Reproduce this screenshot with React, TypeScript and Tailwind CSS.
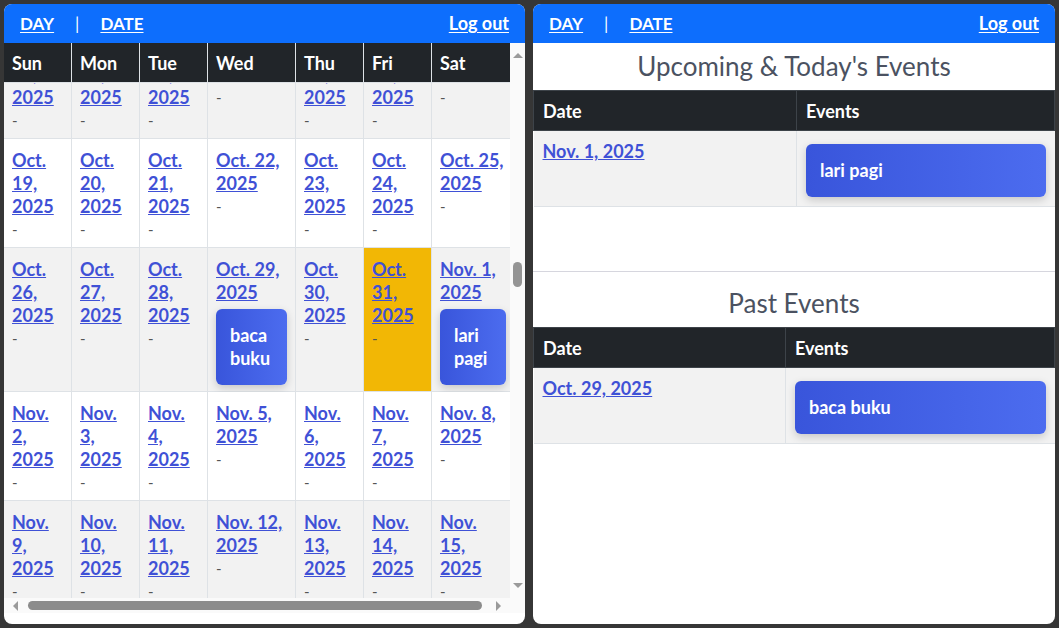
import { useLayoutEffect, useRef } from "react";

// Django-style "N j, Y" month names
const MONTHS = ["Jan.", "Feb.", "March", "April", "May", "June", "July", "Aug.", "Sept.", "Oct.", "Nov.", "Dec."];
const DAYS = ["Sun", "Mon", "Tue", "Wed", "Thu", "Fri", "Sat"];
const COL_W = ["w-[68px]", "w-[68px]", "w-[68px]", "w-[88px]", "w-[68px]", "w-[68px]", "w-[83px]"];

const EVENTS: Record<string, string[]> = {
  "2025-10-29": ["baca buku"],
  "2025-11-01": ["lari pagi"],
};
const TODAY = "2025-10-31";

const pad = (n: number) => String(n).padStart(2, "0");
const keyOf = (d: Date) => `${d.getUTCFullYear()}-${pad(d.getUTCMonth() + 1)}-${pad(d.getUTCDate())}`;
const label = (d: Date) => `${MONTHS[d.getUTCMonth()]} ${d.getUTCDate()}, ${d.getUTCFullYear()}`;

function buildWeeks() {
  const weeks: Date[][] = [];
  const cur = new Date(Date.UTC(2024, 11, 29));
  const end = new Date(Date.UTC(2027, 0, 3));
  while (cur < end) {
    const week: Date[] = [];
    for (let i = 0; i < 7; i++) {
      week.push(new Date(cur));
      cur.setUTCDate(cur.getUTCDate() + 1);
    }
    weeks.push(week);
  }
  return weeks;
}

const WEEKS = buildWeeks();
const ANCHOR = WEEKS.findIndex((w) => keyOf(w[0]) === "2025-10-19");

function TopBar() {
  return (
    <div className="flex h-[39px] shrink-0 items-center justify-between bg-[#0d6efd] px-4 text-[17px] font-bold text-white">
      <div className="flex items-center">
        <a className="underline underline-offset-2">DAY</a>
        <span className="mx-[21px] font-normal">|</span>
        <a className="underline underline-offset-2">DATE</a>
      </div>
      <a className="text-[18px] underline underline-offset-2">Log out</a>
    </div>
  );
}

function EventChip({ title }: { title: string }) {
  return (
    <div className="mt-[5px] rounded-md bg-linear-to-r from-[#3955db] to-[#4c6cef] px-[14px] py-[15px] text-[18px] leading-[23px] font-bold text-white shadow-[0_3px_8px_rgba(0,0,0,0.18)]">
      {title}
    </div>
  );
}

// little scrollbar arrow triangles
function Arrow({ dir }: { dir: "up" | "down" | "left" | "right" }) {
  const pts = {
    up: "0,5 5,0 10,5",
    down: "0,0 10,0 5,5",
    left: "5,0 5,10 0,5",
    right: "0,0 0,10 5,5",
  }[dir];
  const vert = dir === "up" || dir === "down";
  return (
    <svg width={vert ? 10 : 5} height={vert ? 5 : 10} viewBox={vert ? "0 0 10 5" : "0 0 5 10"}>
      <polygon points={pts} fill="#9a9a9a" />
    </svg>
  );
}

function Calendar() {
  const scroller = useRef<HTMLDivElement>(null);
  const anchor = useRef<HTMLTableRowElement>(null);

  useLayoutEffect(() => {
    if (scroller.current && anchor.current) {
      scroller.current.scrollTop = anchor.current.offsetTop - 96;
    }
  }, []);

  return (
    <div className="flex min-h-0 flex-1 flex-col">
      <div className="flex min-h-0 flex-1">
        <div ref={scroller} className="min-w-0 flex-1 overflow-hidden">
          <table className="w-[511px] table-fixed border-separate border-spacing-0">
            <colgroup>
              {COL_W.map((w, i) => (
                <col key={i} className={w} />
              ))}
            </colgroup>
            <thead>
              <tr>
                {DAYS.map((d) => (
                  <th
                    key={d}
                    className="sticky top-0 z-10 border-r border-b border-[#dee2e6] bg-[#212529] px-2 pt-[9px] pb-[7px] text-left text-[18px] leading-[23px] font-bold text-white"
                  >
                    {d}
                  </th>
                ))}
              </tr>
            </thead>
            <tbody>
              {WEEKS.map((week, wi) => (
                <tr key={wi} ref={wi === ANCHOR ? anchor : undefined}>
                  {week.map((d) => {
                    const k = keyOf(d);
                    const ev = EVENTS[k];
                    const bg = k === TODAY ? "bg-[#f2b705]" : (wi - ANCHOR) % 2 === 0 ? "bg-white" : "bg-[#f2f2f2]";
                    return (
                      <td
                        key={k}
                        className={`border-r border-b border-[#dee2e6] px-2 pt-[10px] pb-[6px] align-top text-[18px] leading-[23px] ${bg}`}
                      >
                        <a className="font-bold text-[#3f51d6] underline underline-offset-[1px]">{label(d)}</a>
                        {ev ? ev.map((e) => <EventChip key={e} title={e} />) : <div className="text-[15px] text-[#555]">-</div>}
                      </td>
                    );
                  })}
                </tr>
              ))}
            </tbody>
          </table>
        </div>
        <div className="flex w-[15px] shrink-0 flex-col items-center bg-[#fafafa] pt-[10px] pb-[10px]">
          <Arrow dir="up" />
          <div className="flex-1 pt-[204px]">
            <div className="h-[25px] w-[9px] rounded-full bg-[#959595]" />
          </div>
          <Arrow dir="down" />
        </div>
      </div>
      <div className="flex h-[15px] shrink-0 items-center bg-[#fafafa] pl-[9px]">
        <Arrow dir="left" />
        <div className="ml-[10px] h-[9px] w-[454px] rounded-full bg-[#8c8c8c]" />
        <div className="ml-[14px]">
          <Arrow dir="right" />
        </div>
      </div>
    </div>
  );
}

function EventTable({ dateCol, date, title }: { dateCol: string; date: string; title: string }) {
  return (
    <table className="w-full table-fixed border-collapse">
      <colgroup>
        <col className={dateCol} />
        <col />
      </colgroup>
      <thead>
        <tr className="bg-[#212529] text-left text-[18px] leading-[23px] font-bold text-white">
          <th className="border border-[#3d4349] px-[9px] pt-[9px] pb-[7px]">Date</th>
          <th className="border border-[#3d4349] px-[9px] pt-[9px] pb-[7px]">Events</th>
        </tr>
      </thead>
      <tbody>
        <tr className="bg-[#f2f2f2]">
          <td className="border-b border-[#dee2e6] px-[9px] pt-[9px] pb-[7px] align-top text-[18px] leading-[23px]">
            <a className="font-bold text-[#3f51d6] underline underline-offset-[1px]">{date}</a>
          </td>
          <td className="border-b border-l border-[#dee2e6] px-[9px] pt-[8px] pb-[9px] align-top">
            <EventChip title={title} />
          </td>
        </tr>
      </tbody>
    </table>
  );
}

export default function App() {
  return (
    <div className="flex h-[628px] w-[1059px] gap-2 bg-[#363636] p-1 font-['Lato','Noto_Sans',sans-serif]">
      <div className="flex h-[620px] w-[521px] flex-col overflow-hidden rounded-lg bg-white pb-[11px]">
        <TopBar />
        <Calendar />
      </div>
      <div className="flex h-[620px] w-[522px] flex-col overflow-hidden rounded-lg bg-white">
        <TopBar />
        <h2 className="text-center text-[26px] leading-[47px] text-[#4b5261]">Upcoming &amp; Today's Events</h2>
        <EventTable dateCol="w-[263px]" date="Nov. 1, 2025" title="lari pagi" />
        <div className="h-[64px]" />
        <div className="border-t border-[#d6d6de] pt-2">
          <h2 className="text-center text-[26px] leading-[47px] text-[#4b5261]">Past Events</h2>
          <EventTable dateCol="w-[252px]" date="Oct. 29, 2025" title="baca buku" />
        </div>
      </div>
    </div>
  );
}
